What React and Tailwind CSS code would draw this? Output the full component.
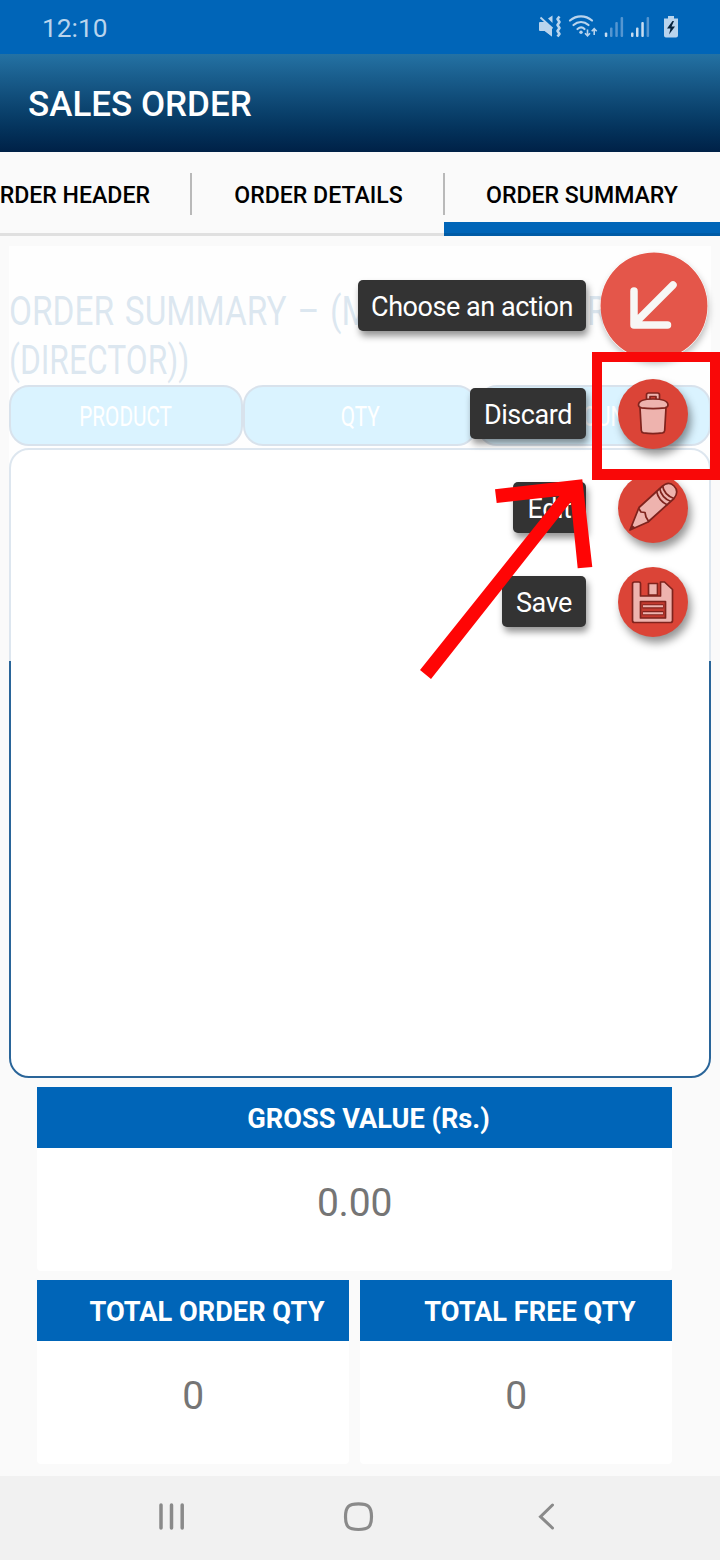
import React from "react";

function StatusIcons() {
  return (
    <svg width="142" height="28" viewBox="538 13 142 28" fill="none">
      <g fill="#b9d4ed">
        <path d="M540 22h5l7 6v8.500l-7-5.500h-5a1 1 0 0 1-1-1v-7a1 1 0 0 1 1-1z" />
        <path d="M544 22l1-0.500 7 6v9l-8-6z" />
        <path d="M548 18.500l4.500-3v7.500z" />
      </g>
      <path d="M540.500 17.500L552.500 28.500" stroke="#b9d4ed" strokeWidth="1.800" />
      <path d="M559.500 16.500l-2 2.500 2 3-2 3 2 3-2 3 2 3-2 2.500" stroke="#b9d4ed" strokeWidth="2.600" strokeLinejoin="round" />
      <g stroke="#b9d4ed" strokeWidth="2.200" strokeLinecap="round">
        <path d="M570 20.500c6.500-5.500 15.500-5.500 22 0" />
        <path d="M573.500 25c4.500-4 10.500-4 15 0" />
        <path d="M577.500 29c2.500-2 5-2 7 0" />
      </g>
      <circle cx="581" cy="32.300" r="1.700" fill="#b9d4ed" />
      <path d="M587.500 29.500v6m-2.500-2.200l2.500 2.500 2.500-2.500M594.200 35v-6m-2.500 2.200l2.500-2.500 2.500 2.500" stroke="#b9d4ed" strokeWidth="1.600" />
      <g fill="#5596d1">
        <rect x="610" y="27.500" width="2.500" height="9.500" rx="1" />
        <rect x="615.300" y="22" width="2.500" height="15" rx="1" />
        <rect x="620.600" y="17" width="2.500" height="20" rx="1" />
        <rect x="646.600" y="17" width="2.500" height="20" rx="1" />
      </g>
      <g fill="#c8ddf0">
        <rect x="604.800" y="32.500" width="2.500" height="4.500" rx="1" />
        <rect x="631" y="32.500" width="2.500" height="4.500" rx="1" />
        <rect x="636" y="27.500" width="2.500" height="9.500" rx="1" />
        <rect x="641.300" y="22" width="2.500" height="15" rx="1" />
      </g>
      <path d="M668 16h6v2.500h4v17a2 2 0 0 1-2 2h-10a2 2 0 0 1-2-2v-17h4z" fill="#b9d4ed" />
      <path d="M672.500 21l-5.500 7.500h3.500l-1.500 6 6-8h-3.500l2.500-5.500z" fill="#06223c" />
    </svg>
  );
}

const art = { fill: "#eeb3ae", stroke: "#7f231d", strokeWidth: 1.7, strokeLinejoin: "round" };

function TrashIcon() {
  return (
    <svg width="70" height="70" viewBox="0 0 70 70" {...art}>
      <path d="M22 28.500h26l-1.300 23q-.2 2-2.200 2.400-9.500 1.600-19 0-2-.4-2.200-2.400z" />
      <path d="M28.500 20.500v-4.500q0-2 2-2h9q2 0 2 2v4.500h-3.500v-3h-6v3z" />
      <path d="M20.500 26c0-4.500 5-6 14.500-6s15 1.500 15 6c0 1.800-1 2.300-3 2.800q-12 1.500-23.500 0c-2-.5-3-1-3-2.800z" />
    </svg>
  );
}

function PencilIcon() {
  return (
    <svg width="70" height="70" viewBox="0 0 70 70" {...art}>
      <path d="M12 57l9-22.500L43.500 14q7-6.500 12.500-1t0 12.500L30 49z" />
      <path d="M20.500 35l2.500 4 4 .5 1 4.500 3 5" fill="none" />
      <path d="M44.500 12.500q1.500 9.500 11.500 13M41.500 15q2 10 11.500 13.500M38.500 18q2 10 11 14" fill="none" />
      <path d="M12 57l2-5 3.500 2.500z" fill="#7f231d" stroke="none" />
    </svg>
  );
}

function SaveIcon() {
  return (
    <svg width="70" height="70" viewBox="0 0 70 70" {...art}>
      <path d="M16.500 15h4.500q1.500 0 1.500 1.500v12.500h20V15h4l8 7.500v31q0 2-2 2h-36q-2 0-2-2v-36.500q0-2 2-2z" />
      <path d="M30.500 16.500h9v11.500h-9z" />
      <path d="M22.500 34.500h25v16.500h-25z" fill="#c43b30" />
      <path d="M24.500 39.300h21M24.500 46.200h21" strokeWidth="4.300" />
      <path d="M25 39.300h20M25 46.200h20" stroke="#eeb3ae" strokeWidth="1.900" />
    </svg>
  );
}

const actions = [
  { label: "Discard", width: "w-[116px]", Icon: TrashIcon },
  { label: "Edit", width: "w-[73px]", Icon: PencilIcon },
  { label: "Save", width: "w-[84px]", Icon: SaveIcon },
];

function ActionLabel({ children, width }) {
  return (
    <span className={`${width} h-[51px] shrink-0 rounded-[5px] bg-[#333333] text-center text-[27px] leading-[54px] tracking-[-0.45px] whitespace-nowrap text-white shadow-[2px_5px_7px_rgba(0,0,0,0.42)]`}>
      {children}
    </span>
  );
}

function ActionMenu() {
  return (
    <div className="absolute top-[252px] right-[12px] flex flex-col items-end">
      <div className="flex h-[107px] items-center gap-[14px]">
        <ActionLabel width="w-[228px]">Choose an action</ActionLabel>
        <svg width="108" height="108" viewBox="0 0 108 108" className="rounded-full shadow-[1px_4px_6px_rgba(0,0,0,0.25)]">
          <circle cx="54" cy="54" r="53.500" fill="#e4564a" />
          <path d="M73 33L35.500 70.500M34 39v34H67.500" fill="none" stroke="#f7f7f5" strokeWidth="7.500" strokeLinecap="round" strokeLinejoin="round" />
        </svg>
      </div>
      <div className="mt-[20px] mr-[20px] flex flex-col items-end gap-[24px]">
        {actions.map(({ label, width, Icon }) => (
          <div key={label} className="flex h-[70px] items-center gap-[32px]">
            <div className="flex h-[52px] items-start">
              <ActionLabel width={width}>{label}</ActionLabel>
            </div>
            <span className="h-[70px] w-[70px] rounded-full bg-[#db4437] shadow-[3px_6px_8px_rgba(0,0,0,0.42)]">
              <Icon />
            </span>
          </div>
        ))}
      </div>
    </div>
  );
}

function Total({ title, value }) {
  return (
    <section className="flex-1 overflow-hidden rounded-b-[4px] bg-white">
      <h2 className="h-[61px] bg-[#0065b8] pl-[28px] text-center text-[27.2px] leading-[64px] font-bold text-white">{title}</h2>
      <p className="h-[123px] text-center text-[39px] leading-[111px] tracking-[-0.2px] text-[#757575]">{value}</p>
    </section>
  );
}

function ColumnHead({ children }) {
  return (
    <div className="flex h-[61px] flex-1 items-center justify-center rounded-[20px] border-2 border-[#0d4a86] bg-[#17b4ff] text-[28px] text-white">
      <span className="mt-[2px] inline-block scale-x-[0.74]">{children}</span>
    </div>
  );
}

export default function App() {
  return (
    <div className="relative flex h-[1560px] w-[720px] flex-col overflow-hidden bg-[#fafafa] font-['Roboto',sans-serif]">
      <div className="flex h-[54px] shrink-0 items-center justify-between bg-[#0065b8] pr-[40px] pl-[42px]">
        <span className="pt-[3px] text-[26.300px] text-[#b9d4ed]">12:10</span>
        <StatusIcons />
      </div>
      <header className="flex h-[98px] shrink-0 items-center bg-linear-to-b from-[#2472a4] to-[#002147] pt-[4px] pl-[28px]">
        <h1 className="text-[35px] font-medium text-white">SALES ORDER</h1>
      </header>
      <nav className="flex h-[84px] shrink-0 text-[23.1px] font-medium whitespace-nowrap text-black">
        <div className="flex w-[190px] items-center justify-end border-b-[3px] border-[#e0e0e0] pt-[8px] pr-[40px]">ORDER HEADER</div>
        <div className="flex w-[254px] items-center border-b-[3px] border-[#e0e0e0] pt-[2px]">
          <i className="h-[42px] w-[2px] bg-[#b9b9b9]" />
          <span className="flex-1 pt-[6px] pl-[2px] text-center">ORDER DETAILS</span>
          <i className="-mr-px h-[42px] w-[2px] bg-[#b9b9b9]" />
        </div>
        <div className="flex flex-1 flex-col">
          <span className="h-[70px] text-center leading-[87px]">ORDER SUMMARY</span>
          <span className="h-[14px] border-b-[3px] border-[#005ba6] bg-[#0065b8]" />
        </div>
      </nav>
      <main className="relative mx-[9px] mt-[10px] flex h-[832px] shrink-0 flex-col">
        <h2 className="flex h-[139px] flex-col pt-[41px] text-[41px] leading-[49px] whitespace-nowrap text-[#2268a0]">
          <span className="flex w-[598px] justify-between">
            <span className="w-[350px] origin-left scale-x-[0.815] [word-spacing:3px]">ORDER SUMMARY – (M</span>
            <span className="origin-right scale-x-[0.8]">R</span>
          </span>
          <span className="origin-left scale-x-[0.775]">(DIRECTOR))</span>
        </h2>
        <div className="flex">
          <ColumnHead>PRODUCT</ColumnHead>
          <ColumnHead>QTY</ColumnHead>
          <ColumnHead>AMOUNT</ColumnHead>
        </div>
        <div className="mt-[2px] flex-1 rounded-[20px] border-2 border-[#2a6599] bg-white" />
        <div className="absolute inset-x-0 top-0 h-[415px] bg-white/84" />
      </main>
      <div className="mx-[37px] mt-[9px] mr-[48px] flex flex-col gap-[9px]">
        <Total title="GROSS VALUE (Rs.)" value="0.00" />
        <div className="flex gap-[11px]">
          <Total title="TOTAL ORDER QTY" value="0" />
          <Total title="TOTAL FREE QTY" value="0" />
        </div>
      </div>
      <footer className="mt-auto flex h-[84px] shrink-0 items-start bg-[#f1f1f1] pt-[22px]">
        <svg width="720" height="38" viewBox="0 0 720 38" fill="none" stroke="#8a8a8a" strokeWidth="3.500" strokeLinecap="round">
          <path d="M161 7v23M171.500 7v23M182.200 7v23" />
          <path d="M358.500 5.800c10 0 13 3 13 13s-3 12.700-13 12.700-13-2.700-13-12.700 3-13 13-13z" strokeWidth="3.200" />
          <path d="M552.500 7l-12 11.700 12 11.300" strokeWidth="3" />
        </svg>
      </footer>
      <ActionMenu />
      <div className="absolute top-[352px] left-[592px] h-[128px] w-[128px] border-10 border-b-11 border-[#f90808]" />
      <svg width="180" height="206" viewBox="415 476 180 206" className="absolute top-[476px] left-[415px]">
        <path d="M495 489.300L582.300 479.300L592.300 567L577.700 568.300L571 501.700L431 679L420 670L559.300 496L496.700 503Z" fill="#ff0505" />
      </svg>
    </div>
  );
}
